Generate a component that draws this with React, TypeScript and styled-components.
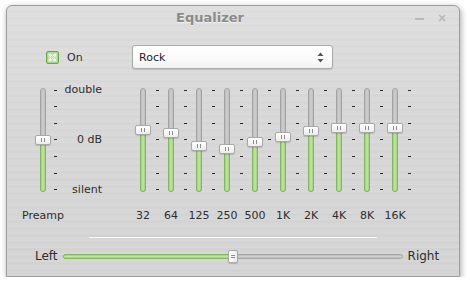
import React from 'react';
import styled, { createGlobalStyle } from 'styled-components';

const GlobalStyle = createGlobalStyle`
  html, body {
    margin: 0;
    padding: 0;
    background: #ffffff;
  }
  body {
    font-family: 'DejaVu Sans', 'Liberation Sans', sans-serif;
    color: #2e2e2e;
  }
`;

const BANDS = [
  { label: '32', value: 0.6 },
  { label: '64', value: 0.57 },
  { label: '125', value: 0.44 },
  { label: '250', value: 0.41 },
  { label: '500', value: 0.48 },
  { label: '1K', value: 0.53 },
  { label: '2K', value: 0.59 },
  { label: '4K', value: 0.62 },
  { label: '8K', value: 0.62 },
  { label: '16K', value: 0.62 },
];

const PREAMP_MARKS = ['double', '', '', '0 dB', '', '', 'silent'];

const TRACK_H = 104;

const VSlider = ({ value }: { value: number }) => {
  const center = 2 + (1 - value) * 100;
  return (
    <SliderBox>
      <Trough />
      <Fill style={{ top: center }} />
      <VHandle style={{ top: center - 5 }}>
        <Grip />
      </VHandle>
    </SliderBox>
  );
};

const CheckIcon = () => (
  <svg width="13" height="13" viewBox="0 0 13 13">
    <rect x="0.5" y="0.5" width="12" height="12" rx="1.5" fill="#a9d68a" stroke="#6fa54a" />
    <rect x="2" y="2" width="9" height="9" fill="#c3e4ac" />
    <path d="M4 4 L9 9 M9 4 L4 9" stroke="#ffffff" strokeWidth="2" strokeLinecap="round" />
    <path d="M4.6 4.6 L8.4 8.4 M8.4 4.6 L4.6 8.4" stroke="#8cc46a" strokeWidth="0.8" />
  </svg>
);

const App = () => {
  return (
    <>
      <GlobalStyle />
      <Window>
        <TitleBar>
          <Title>Equalizer</Title>
          <TitleButtons>
            <MinButton />
            <CloseButton>×</CloseButton>
          </TitleButtons>
        </TitleBar>

        <TopRow>
          <Toggle>
            <CheckIcon />
            <span>On</span>
          </Toggle>
          <Combo>
            <span>Rock</span>
            <Arrows>
              <svg width="7" height="11" viewBox="0 0 7 11">
                <path d="M3.5 0.5 L6.5 4 L0.5 4 Z" fill="#555" />
                <path d="M0.5 7 L6.5 7 L3.5 10.5 Z" fill="#555" />
              </svg>
            </Arrows>
          </Combo>
        </TopRow>

        <SliderArea>
          <PreampCol>
            <SliderRow>
              <VSlider value={0.5} />
              <PreampScale>
                {PREAMP_MARKS.map((m, i) => (
                  <ScaleRow key={i}>
                    <Dash />
                    <ScaleText>{m}</ScaleText>
                  </ScaleRow>
                ))}
              </PreampScale>
            </SliderRow>
            <BandLabel>Preamp</BandLabel>
          </PreampCol>

          <Bands>
            {BANDS.map((b) => (
              <BandCol key={b.label}>
                <SliderRow>
                  <VSlider value={b.value} />
                  <BandScale>
                    {PREAMP_MARKS.map((_, i) => (
                      <ScaleRow key={i}>
                        <Dash />
                      </ScaleRow>
                    ))}
                  </BandScale>
                </SliderRow>
                <BandLabel>{b.label}</BandLabel>
              </BandCol>
            ))}
          </Bands>
        </SliderArea>

        <Separator />

        <BalanceRow>
          <SideLabel>Left</SideLabel>
          <HTrack>
            <HFill style={{ width: '50%' }} />
            <HHandle style={{ left: 'calc(50% - 5px)' }}>
              <HGrip />
            </HHandle>
          </HTrack>
          <SideLabel>Right</SideLabel>
        </BalanceRow>
      </Window>
    </>
  );
};

export default App;

const Window = styled.div`
  margin: 5px 0 0 6px;
  width: 454px;
  height: 272px;
  box-sizing: border-box;
  border: 1px solid #9d9d9d;
  border-radius: 6px 6px 0 0;
  background-color: #d9d9d9;
  background-image: repeating-linear-gradient(
      0deg,
      rgba(255, 255, 255, 0.06) 0px,
      rgba(255, 255, 255, 0.06) 1px,
      transparent 1px,
      transparent 4px,
      rgba(0, 0, 0, 0.015) 4px,
      rgba(0, 0, 0, 0.015) 7px
    ),
    linear-gradient(180deg, #dfdfdf 0%, #d9d9d9 40%, #d5d5d5 100%);
  box-shadow: 1px 2px 6px rgba(0, 0, 0, 0.35);
  display: flex;
  flex-direction: column;
`;

const TitleBar = styled.div`
  height: 26px;
  display: flex;
  align-items: center;
  padding-bottom: 3px;
  box-sizing: border-box;
`;

const Title = styled.div`
  flex: 1;
  text-align: center;
  font-size: 13px;
  font-weight: bold;
  color: #8a8a8a;
  text-shadow: 0 1px 0 rgba(255, 255, 255, 0.6);
`;

const TitleButtons = styled.div`
  width: 46px;
  box-sizing: border-box;
  display: flex;
  align-items: center;
  gap: 13px;
  padding-left: 2px;
`;

const MinButton = styled.span`
  display: block;
  width: 9px;
  height: 2px;
  margin-top: 2px;
  background: #b8b8b8;
`;

const CloseButton = styled.span`
  font-size: 12px;
  line-height: 12px;
  color: #b8b8b8;
  font-weight: bold;
`;

const TopRow = styled.div`
  margin-top: 13px;
  height: 24px;
  display: flex;
  align-items: center;
  padding-left: 39px;
`;

const Toggle = styled.label`
  width: 86px;
  display: flex;
  align-items: center;
  gap: 8px;
  font-size: 11px;
  color: #2e2e2e;

  svg {
    display: block;
  }
`;

const Combo = styled.div`
  width: 201px;
  height: 24px;
  box-sizing: border-box;
  border: 1px solid #a9a9a9;
  border-radius: 3px;
  background: linear-gradient(180deg, #ffffff 0%, #fbfbfb 60%, #f1f1f1 100%);
  box-shadow: 0 1px 1px rgba(0, 0, 0, 0.12);
  display: flex;
  align-items: center;
  justify-content: space-between;
  padding: 0 8px 0 6px;
  font-size: 11px;
  color: #222;
`;

const Arrows = styled.div`
  display: flex;

  svg {
    display: block;
  }
`;

const SliderArea = styled.div`
  margin-top: 19px;
  display: flex;
  align-items: flex-start;
`;

const PreampCol = styled.div`
  margin-left: 28px;
  display: flex;
  flex-direction: column;
`;

const Bands = styled.div`
  margin-left: 33px;
  display: flex;
`;

const BandCol = styled.div`
  width: 28px;
  display: flex;
  flex-direction: column;
`;

const SliderRow = styled.div`
  display: flex;
  align-items: flex-start;
`;

const SliderBox = styled.div`
  position: relative;
  width: 16px;
  height: ${TRACK_H}px;
  flex-shrink: 0;
`;

const Trough = styled.div`
  position: absolute;
  left: 5px;
  top: 0;
  width: 6px;
  height: 100%;
  box-sizing: border-box;
  border: 1px solid #a3a3a3;
  border-radius: 3px;
  background: linear-gradient(90deg, #b9b9b9, #d0d0d0 50%, #bcbcbc);
`;

const Fill = styled.div`
  position: absolute;
  left: 5px;
  bottom: 0;
  width: 6px;
  box-sizing: border-box;
  border: 1px solid #84b760;
  border-radius: 0 0 3px 3px;
  background: linear-gradient(90deg, #9ccd7a, #c3e6a8 50%, #9fcf7c);
`;

const VHandle = styled.div`
  position: absolute;
  left: 0;
  width: 16px;
  height: 10px;
  box-sizing: border-box;
  border: 1px solid #a8a8a8;
  border-radius: 2px;
  background: linear-gradient(180deg, #ffffff, #ececec);
  box-shadow: 0 1px 1px rgba(0, 0, 0, 0.15);
  display: flex;
  align-items: center;
  justify-content: center;
`;

const Grip = styled.span`
  width: 2px;
  height: 4px;
  border-left: 1px solid #8c8c8c;
  border-right: 1px solid #8c8c8c;
`;

const PreampScale = styled.div`
  margin-top: -4px;
  height: ${TRACK_H + 8}px;
  margin-left: 3px;
  display: flex;
  flex-direction: column;
  justify-content: space-between;
`;

const BandScale = styled(PreampScale)`
  margin-left: 5px;
`;

const ScaleRow = styled.div`
  height: 12px;
  display: flex;
  align-items: center;
`;

const Dash = styled.span`
  width: 3px;
  height: 1px;
  background: #2a2a2a;
`;

const ScaleText = styled.span`
  width: 42px;
  margin-left: 3px;
  text-align: right;
  font-size: 11px;
  line-height: 12px;
  color: #2e2e2e;
  white-space: nowrap;
`;

const BandLabel = styled.div`
  width: 16px;
  margin-top: 13px;
  height: 14px;
  display: flex;
  justify-content: center;
  font-size: 11px;
  line-height: 14px;
  white-space: nowrap;
  color: #2e2e2e;
`;

const Separator = styled.div`
  align-self: center;
  margin-top: 13px;
  width: 288px;
  height: 1px;
  background: #fbfbfb;
  border-top: 1px solid #cdcdcd;
`;

const BalanceRow = styled.div`
  margin-top: 10px;
  height: 16px;
  display: flex;
  align-items: center;
  padding-left: 28px;
  gap: 5px;
`;

const SideLabel = styled.span`
  font-size: 12px;
  color: #2e2e2e;
`;

const HTrack = styled.div`
  position: relative;
  width: 340px;
  height: 5px;
  box-sizing: border-box;
  border: 1px solid #a6a6a6;
  border-radius: 3px;
  background: linear-gradient(180deg, #bcbcbc, #cfcfcf 50%, #bdbdbd);
`;

const HFill = styled.div`
  position: absolute;
  left: -1px;
  top: -1px;
  height: 5px;
  box-sizing: border-box;
  border: 1px solid #84b760;
  border-radius: 3px 0 0 3px;
  background: linear-gradient(180deg, #9ccd7a, #c3e6a8 50%, #9fcf7c);
`;

const HHandle = styled.div`
  position: absolute;
  top: -5px;
  width: 10px;
  height: 13px;
  box-sizing: border-box;
  border: 1px solid #a8a8a8;
  border-radius: 2px;
  background: linear-gradient(90deg, #ffffff, #ececec);
  box-shadow: 0 1px 1px rgba(0, 0, 0, 0.15);
  display: flex;
  align-items: center;
  justify-content: center;
`;

const HGrip = styled.span`
  width: 4px;
  height: 1px;
  border-top: 1px solid #8c8c8c;
  border-bottom: 1px solid #8c8c8c;
`;
